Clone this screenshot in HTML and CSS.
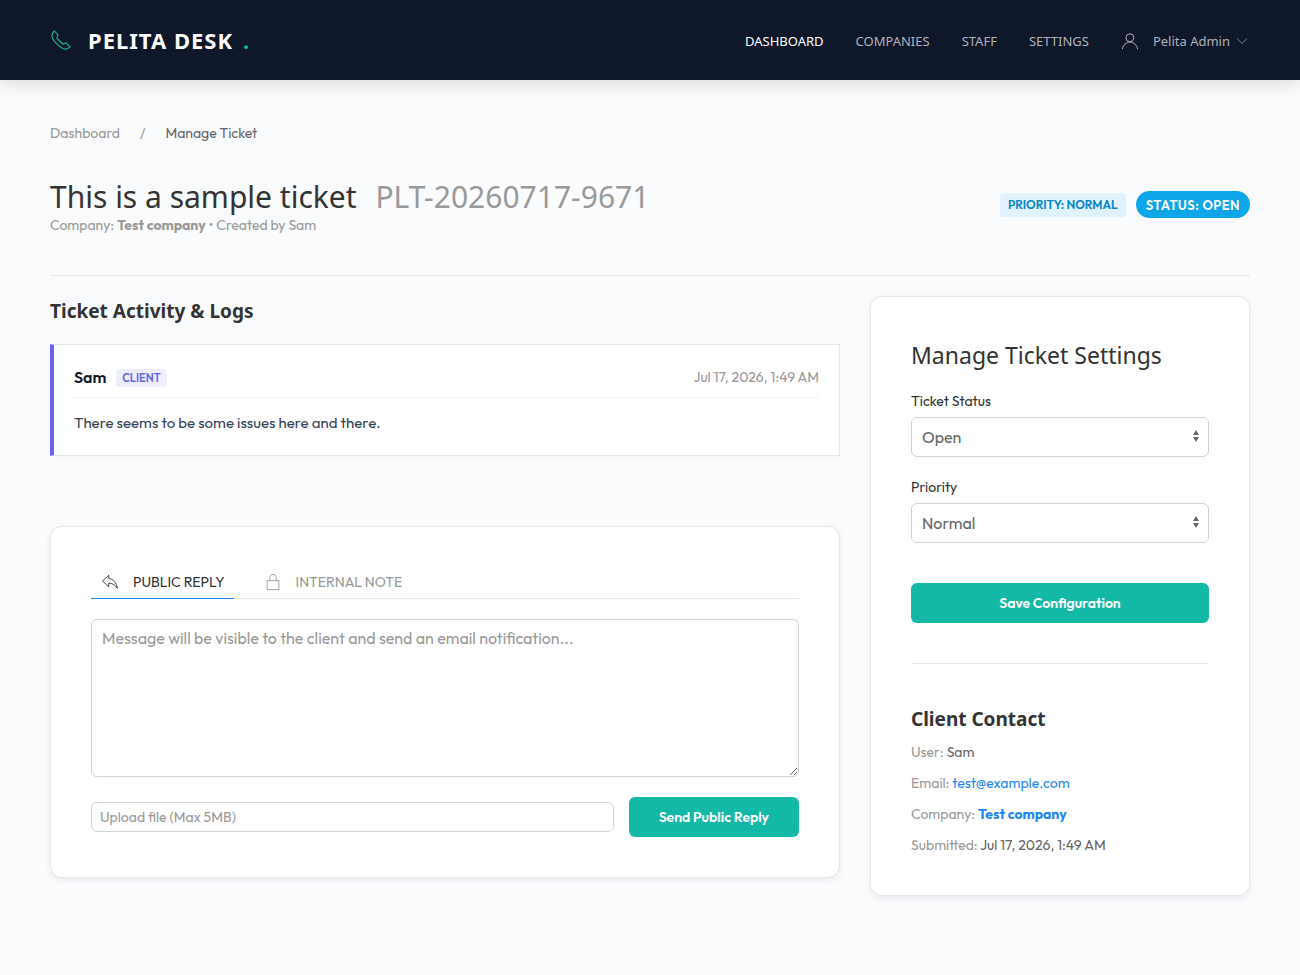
FILE: index.html
```html
<!DOCTYPE html>
<html lang="en">
<head>
<meta charset="utf-8">
<meta name="viewport" content="width=device-width, initial-scale=1">
<title>Manage Ticket - Pelita Desk</title>
<link rel="stylesheet" href="styles.css">
</head>
<body>
<header class="navbar">
  <a class="logo" href="#">
    <svg class="logo-icon" width="22" height="22" viewBox="0 0 20 20" aria-hidden="true"><path d="M6.189,13.611C8.134,15.525 11.097,18.239 13.867,18.257C16.47,18.275 18.2,16.241 18.2,16.241L14.509,12.551L11.539,13.639L6.189,8.29L7.313,5.355L3.76,1.8C3.76,1.8 1.732,3.537 1.7,6.092C1.667,8.809 4.347,11.738 6.189,13.611"/></svg>
    <span class="logo-text">PELITA DESK</span>
    <span class="logo-dot">.</span>
  </a>
  <nav class="nav">
    <a class="nav-link active" href="#">DASHBOARD</a>
    <a class="nav-link" href="#">COMPANIES</a>
    <a class="nav-link" href="#">STAFF</a>
    <a class="nav-link" href="#">SETTINGS</a>
    <button class="nav-link account" type="button">
      <svg class="account-icon" width="18" height="18" viewBox="0 0 20 20" aria-hidden="true"><circle cx="9.9" cy="6.4" r="4.4"/><path d="M1.5,19 C2.3,14.5 5.8,11.2 10,11.2 C14.2,11.2 17.7,14.6 18.5,19.2"/></svg>
      <span>Pelita Admin</span>
      <svg class="chevron" width="12" height="12" viewBox="0 0 12 12" aria-hidden="true"><polyline points="1 3.5 6 8.5 11 3.5"/></svg>
    </button>
  </nav>
</header>

<main class="page">
  <nav class="breadcrumb" aria-label="Breadcrumb">
    <a href="#">Dashboard</a>
    <span>/</span>
    <span class="current">Manage Ticket</span>
  </nav>

  <section class="ticket-head">
    <div>
      <h1 class="title">This is a sample ticket <span class="ticket-id">PLT-20260717-9671</span></h1>
      <p class="meta">Company: <strong>Test company</strong> • Created by Sam</p>
    </div>
    <div class="badges">
      <span class="badge priority">PRIORITY: NORMAL</span>
      <span class="badge status">STATUS: OPEN</span>
    </div>
  </section>

  <div class="columns">
    <div class="main-column">
      <h2 class="section-title">Ticket Activity &amp; Logs</h2>
      <article class="log">
        <header class="log-head">
          <span class="author">Sam</span>
          <span class="role">CLIENT</span>
          <time class="time">Jul 17, 2026, 1:49 AM</time>
        </header>
        <p class="log-body">There seems to be some issues here and there.</p>
      </article>

      <form class="card reply">
        <div class="tabs">
          <button class="tab active" type="button">
            <svg width="18" height="18" viewBox="0 0 20 20" aria-hidden="true"><path d="M1.6 8.9L8.6 2.5V6.2C13.4 6.8 17.2 10.4 18.2 17C15.6 13.2 12.8 11.6 8.6 11.3V15.3Z"/></svg>
            PUBLIC REPLY
          </button>
          <button class="tab" type="button">
            <svg width="18" height="18" viewBox="0 0 20 20" aria-hidden="true"><rect x="3.5" y="8.5" width="13" height="10"/><path d="M6.5,8 L6.5,4.88 C6.5,3.01 8.07,1.5 10,1.5 C11.93,1.5 13.5,3.01 13.5,4.88 L13.5,8"/></svg>
            INTERNAL NOTE
          </button>
        </div>
        <textarea class="message" aria-label="Message" placeholder="Message will be visible to the client and send an email notification..."></textarea>
        <div class="actions">
          <input class="upload" type="text" aria-label="Upload file" placeholder="Upload file (Max 5MB)">
          <button class="button" type="button">Send Public Reply</button>
        </div>
      </form>
    </div>

    <aside class="card side">
      <form class="settings">
        <h2 class="side-title">Manage Ticket Settings</h2>
        <label class="label" for="ticket-status">Ticket Status</label>
        <select class="select" id="ticket-status"><option>Open</option></select>
        <label class="label" for="priority">Priority</label>
        <select class="select" id="priority"><option>Normal</option></select>
        <button class="button save" type="button">Save Configuration</button>
      </form>
      <section class="contact">
        <h2 class="section-title">Client Contact</h2>
        <p>User: <span class="value">Sam</span></p>
        <p>Email: <a href="#">test@example.com</a></p>
        <p>Company: <a class="company" href="#">Test company</a></p>
        <p>Submitted: <span class="value">Jul 17, 2026, 1:49 AM</span></p>
      </section>
    </aside>
  </div>
</main>
</body>
</html>
```
FILE: styles.css
```css
* {
  box-sizing: border-box;
}

:root {
  --body-font: Outfit, Lato, "Liberation Sans", sans-serif;
  --heading-font: "Segoe UI", "Noto Sans", "Open Sans", sans-serif;
  --teal: #14b8a6;
  --muted: #999;
  --link: #1e87f0;
}

body {
  margin: 0;
  background: #fafbfd;
  color: #666;
  font: 15px/20px var(--body-font);
}

h1, h2, p {
  margin: 0;
}

a {
  color: var(--link);
  text-decoration: none;
}

button, input, select, textarea {
  font: inherit;
}

svg {
  flex: none;
  fill: none;
  stroke: currentColor;
}

.navbar {
  display: flex;
  align-items: center;
  justify-content: space-between;
  height: 80px;
  padding: 0 50px;
  background: #0f172a;
  box-shadow: 0 4px 16px rgba(0, 0, 0, 0.13);
  font-family: var(--heading-font);
}

.logo {
  display: flex;
  align-items: center;
  color: #fff;
  font-size: 22px;
  font-weight: 700;
  line-height: 32px;
}

.logo-icon {
  margin-right: 16px;
  color: var(--teal);
}

.logo-text {
  letter-spacing: 1px;
}

.logo-dot {
  margin-left: 10px;
  color: var(--teal);
}

.nav {
  display: flex;
  align-items: center;
  gap: 32px;
  padding: 2px 2px 0 0;
}

.nav-link {
  color: #afb3bb;
  font-size: 13px;
}

.nav-link.active {
  color: #fff;
}

.account {
  display: flex;
  align-items: center;
  padding: 0;
  border: 0;
  background: none;
  font-family: var(--heading-font);
}

.account-icon {
  margin-right: 14px;
  stroke-width: 1.1;
}

.chevron {
  margin-left: 6px;
  opacity: 0.7;
}

.page {
  padding: 43px 50px 78px;
}

.breadcrumb {
  display: flex;
  gap: 20px;
  font-size: 14px;
}

.breadcrumb a, .breadcrumb span {
  color: var(--muted);
}

.breadcrumb .current {
  color: #666;
}

.ticket-head {
  display: flex;
  align-items: flex-start;
  justify-content: space-between;
  margin-top: 36px;
  padding-bottom: 40px;
  border-bottom: 1px solid #e5e5e5;
}

.title {
  color: #333;
  font: 400 30px/36px var(--heading-font);
}

.ticket-id {
  margin-left: 11px;
  color: var(--muted);
}

.meta {
  color: var(--muted);
  font-size: 14px;
}

.badges {
  display: flex;
  align-items: center;
  gap: 10px;
  margin-top: 12px;
}

.badge {
  font-weight: 600;
}

.priority {
  padding: 2px 8px;
  border-radius: 4px;
  background: #e0f2fe;
  color: #0284c7;
  font-size: 12px;
}

.status {
  padding: 4px 10px 3px;
  border-radius: 14px;
  background: #0ea5e9;
  color: #fff;
  font-size: 13px;
  letter-spacing: 0.5px;
}

.columns {
  display: grid;
  grid-template-columns: minmax(0, 1fr) 380px;
  align-items: start;
  gap: 30px;
  margin-top: 20px;
}

.section-title {
  color: #333;
  font: 700 19px/30px var(--heading-font);
}

.log {
  margin-top: 18px;
  padding: 20px;
  border: 1px solid #e2e8f0;
  border-left: 4px solid #6366f1;
  background: #fff;
  box-shadow: 0 2px 4px rgba(0, 0, 0, 0.02);
}

.log-head {
  display: flex;
  align-items: center;
  padding-bottom: 8px;
  border-bottom: 1px solid #f1f1f3;
  line-height: 24px;
}

.author {
  color: #0f172a;
  font-size: 16px;
  font-weight: 600;
}

.role {
  margin: 2px 0 0 10px;
  padding: 0 6px;
  border-radius: 4px;
  background: #eef;
  color: #6366f1;
  font-size: 11px;
  font-weight: 600;
  line-height: 18px;
}

.time {
  margin-left: auto;
  color: var(--muted);
  font-size: 14px;
}

.log-body {
  margin-top: 12px;
  color: #334155;
  font-size: 15px;
  line-height: 25px;
}

.card {
  padding: 40px;
  border: 1px solid #e5e7eb;
  border-radius: 12px;
  background: #fff;
  box-shadow: 0 2px 6px rgba(15, 23, 42, 0.08);
}

.reply {
  margin-top: 70px;
}

.tabs {
  display: flex;
  gap: 20px;
  border-bottom: 1px solid #e5e5e5;
}

.tab {
  display: flex;
  align-items: center;
  gap: 14px;
  margin-bottom: -1px;
  padding: 5px 9px 6px 10px;
  border: 0;
  border-bottom: 1px solid transparent;
  background: none;
  color: var(--muted);
  font-size: 14px;
}

.tab.active {
  border-bottom-color: var(--link);
  color: #333;
}

.message {
  display: block;
  width: 100%;
  height: 158px;
  margin: 20px 0;
  padding: 5px 10px;
  border: 1px solid #cbd5d9;
  border-radius: 6px;
  background: #fff;
  font-size: 16px;
  line-height: 26px;
  resize: vertical;
}

::placeholder {
  color: var(--muted);
  opacity: 1;
}

.actions {
  display: flex;
  align-items: center;
  gap: 15px;
}

.upload {
  flex: 1;
  min-width: 0;
  height: 30px;
  padding: 0 8px;
  border: 1px solid #cbd5d9;
  border-radius: 6px;
  background: #fff;
  font-size: 14px;
}

.button {
  height: 40px;
  padding: 0 30px;
  border: 0;
  border-radius: 6px;
  background: var(--teal);
  color: #fff;
  font-size: 14px;
  font-weight: 600;
}

.settings {
  display: flex;
  flex-direction: column;
  padding-bottom: 40px;
  border-bottom: 1px solid #e5e5e5;
}

.side-title {
  margin-bottom: 18px;
  color: #333;
  font: 400 23px/36px var(--heading-font);
}

.label {
  margin-bottom: 6px;
  color: #333;
  font-size: 14px;
}

.select {
  height: 40px;
  margin-bottom: 20px;
  padding: 0 10px;
  border: 1px solid #cbd5d9;
  border-radius: 6px;
  appearance: none;
  background: #fff url("data:image/svg+xml,%3Csvg xmlns='http://www.w3.org/2000/svg' width='24' height='16'%3E%3Cpath fill='%23666' d='M12 1L9 6h6zM12 13L9 8h6z'/%3E%3C/svg%3E") no-repeat right center;
  color: #666;
  font-size: 16px;
}

.save {
  margin-top: 20px;
}

.contact {
  padding-top: 40px;
  color: var(--muted);
  font-size: 14px;
}

.contact p {
  margin-bottom: 11px;
}

.contact .section-title {
  margin-bottom: 8px;
}

.contact p:last-child {
  margin-bottom: 0;
}

.value {
  color: #666;
}

.company {
  font-weight: 700;
}
```
